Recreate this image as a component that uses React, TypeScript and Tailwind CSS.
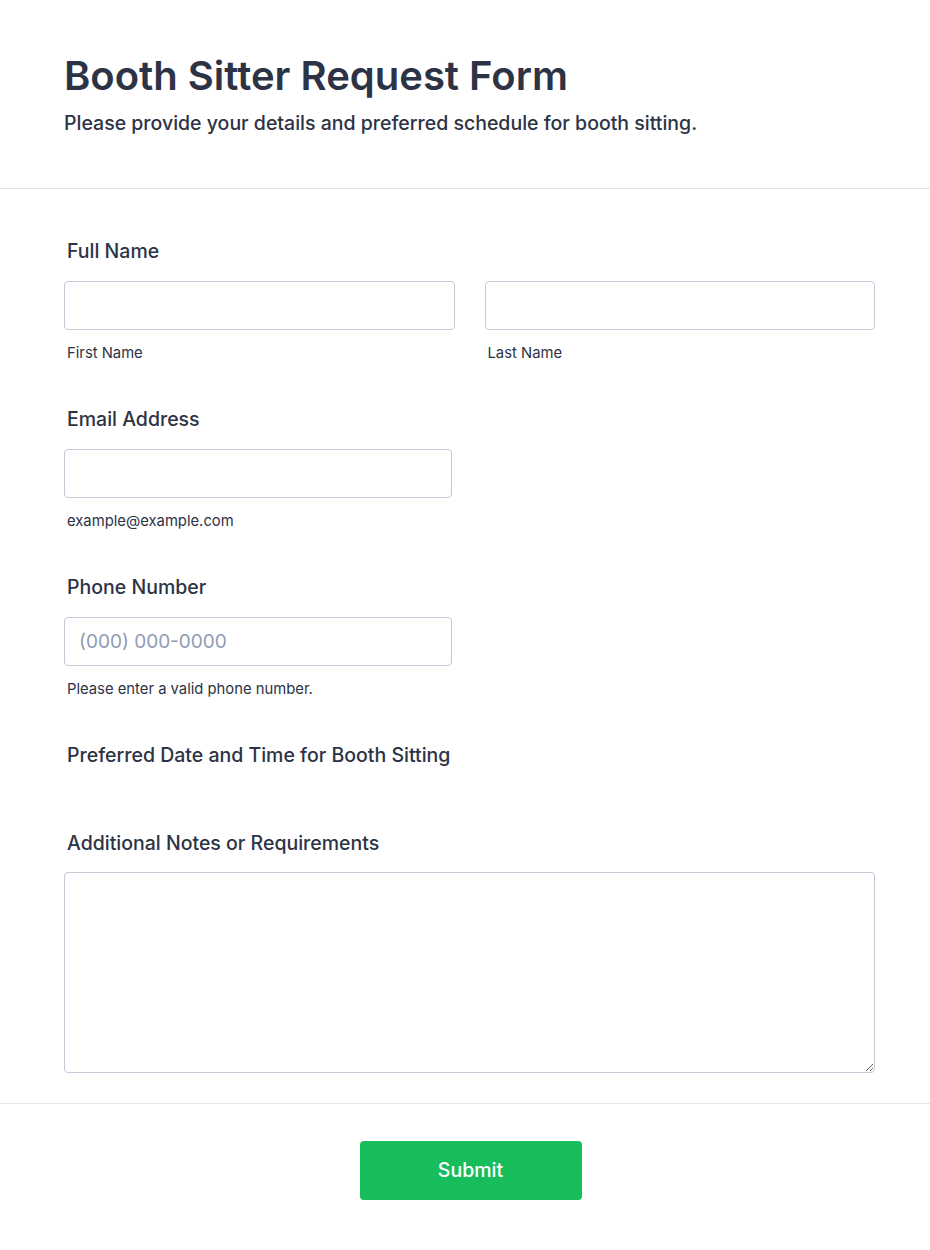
import React from "react";

function Field({ label, children }: { label: string; children: React.ReactNode }) {
  return (
    <div className="flex flex-col">
      <label className="ml-[3px] text-[19.5px] leading-7 font-medium text-[#2c3345]">{label}</label>
      <div className="mt-[16px]">{children}</div>
    </div>
  );
}

function Sub({ text }: { text: string }) {
  return <p className="mt-[13px] ml-[3px] text-[14.8px] leading-5 text-[#2c3345]">{text}</p>;
}

const inputCls =
  "block h-[49px] w-full rounded-[4px] border border-[#c3cad8] bg-white px-[14px] text-[19px] text-[#2c3345] outline-none placeholder:text-[#8f9bb3]";

export default function App() {
  return (
    <div className="min-h-[1250px] bg-white font-['Inter','Noto_Sans',sans-serif] text-[#2c3345]">
      <header className="border-b border-[#dfe2ea] px-[64px] pt-[52px] pb-[51px]">
        <h1 className="text-[40px] leading-[48px] font-semibold text-[#2c3345]">
          Booth Sitter Request Form
        </h1>
        <p className="mt-[9px] text-[19.5px] leading-7 font-medium text-[#2c3345]">
          Please provide your details and preferred schedule for booth sitting.
        </p>
      </header>

      <form className="flex flex-col pl-[64px] pr-[55px] pt-[48px]">
        <Field label="Full Name">
          <div className="grid grid-cols-2 gap-[30px]">
            <div>
              <input className={inputCls} />
              <Sub text="First Name" />
            </div>
            <div>
              <input className={inputCls} />
              <Sub text="Last Name" />
            </div>
          </div>
        </Field>

        <div className="mt-[42px] w-[388px]">
          <Field label="Email Address">
            <input className={inputCls} />
            <Sub text="example@example.com" />
          </Field>
        </div>

        <div className="mt-[42px] w-[388px]">
          <Field label="Phone Number">
            <input className={inputCls} placeholder="(000) 000-0000" />
            <Sub text="Please enter a valid phone number." />
          </Field>
        </div>

        <div className="mt-[42px]">
          <label className="ml-[3px] text-[19.5px] leading-7 font-medium text-[#2c3345]">
            Preferred Date and Time for Booth Sitting
          </label>
        </div>

        <div className="mt-[60px]">
          <Field label="Additional Notes or Requirements">
            <textarea className="-mt-[1px] block h-[201px] w-full resize-y rounded-[4px] border border-[#c3cad8] bg-white p-[14px] text-[16px] outline-none" />
          </Field>
        </div>
      </form>

      <div className="mt-[30px] flex justify-center border-t border-[#e6e8ef] pt-[37px] pb-[50px] pl-[66px] pr-[55px]">
        <button className="h-[59px] w-[222px] rounded-[4px] bg-[#18bd5b] text-[19.5px] font-medium text-white">
          Submit
        </button>
      </div>
    </div>
  );
}
